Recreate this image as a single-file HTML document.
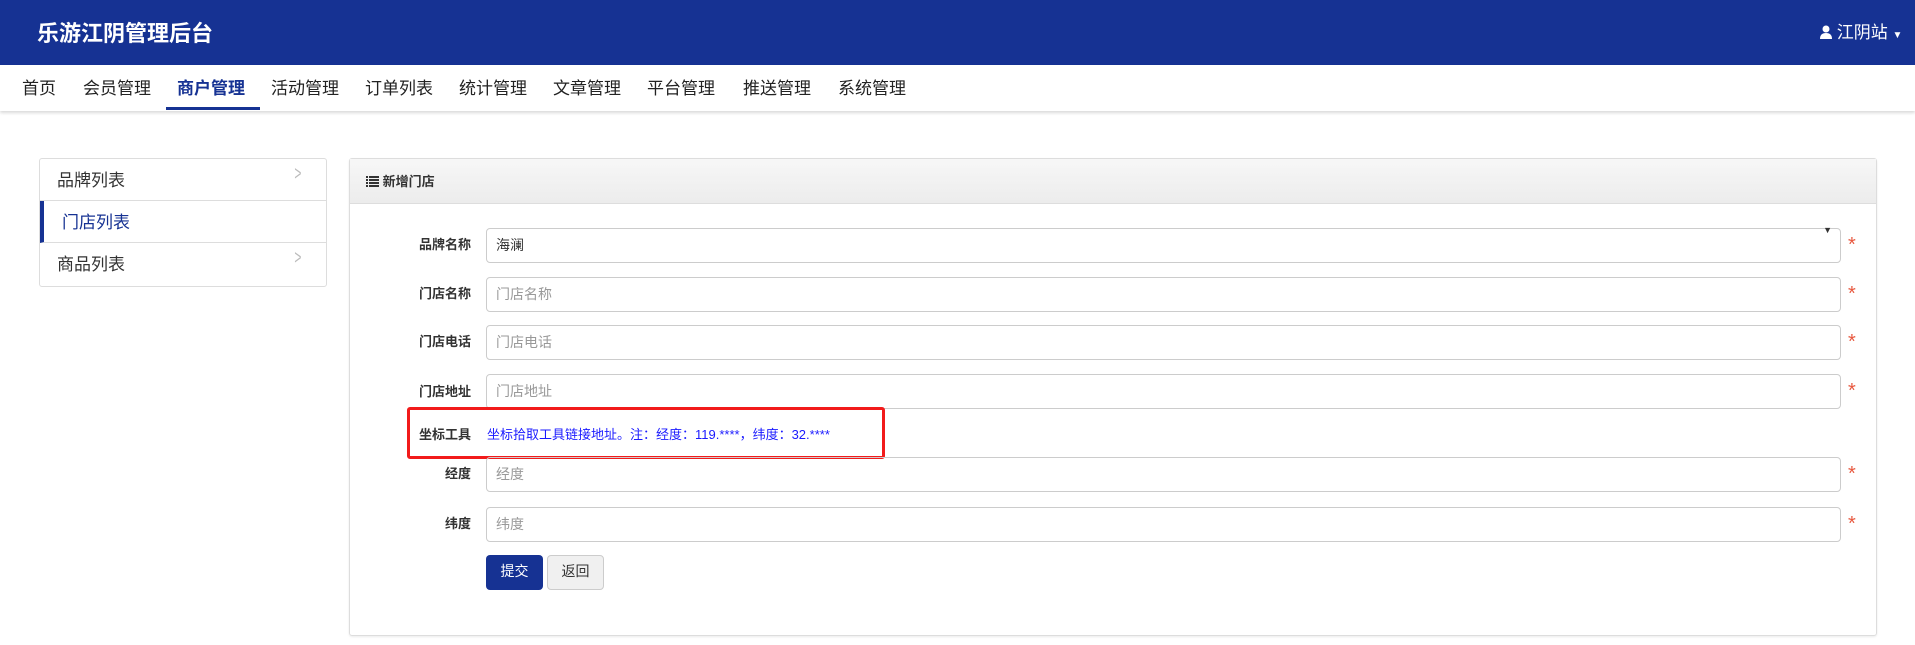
<!DOCTYPE html>
<html><head><meta charset="utf-8"><style>
*{box-sizing:border-box;margin:0;padding:0}
body{width:1915px;height:645px;overflow:hidden;background:#fff;font-family:"Liberation Sans","Noto Sans CJK SC",sans-serif;color:#333;position:relative}
.hd{position:absolute;left:0;top:0;width:1915px;height:65px;background:#163293}
.title{position:absolute;left:37px;top:16px;font-size:22px;font-weight:bold;color:#fff}
.user{position:absolute;left:1820px;top:18px;color:#fff;font-size:17px}
.nav{position:absolute;left:0;top:65px;width:1915px;height:46px;background:#fff;box-shadow:0 2px 3px rgba(0,0,0,.15)}
.nav span{position:absolute;top:9px;font-size:17px;color:#222}
.nav .act{color:#163293;font-weight:bold}
.ul{position:absolute;left:166px;top:107px;width:94px;height:3px;background:#163293}
.side{position:absolute;left:39px;top:158px;width:288px;height:129px;border:1px solid #ddd;border-radius:3px}
.side div{height:42px;border-bottom:1px solid #ddd;font-size:17px;padding:7px 0 0 17px;position:relative}
.side div:last-child{border:none}
.side .a{border-left:4px solid #163293;padding-left:18px;color:#163293}
.side i{position:absolute;right:22px;top:4px;color:#bbb;font-style:normal;font-size:20px;transform:scaleX(.6)}
.panel{position:absolute;left:349px;top:158px;width:1528px;height:478px;border:1px solid #ddd;border-radius:3px;box-shadow:0 1px 2px rgba(0,0,0,.08)}
.ph{height:45px;background:linear-gradient(#f7f7f7,#ececec);border-bottom:1px solid #ddd;font-size:13px;font-weight:bold;padding:12px 0 0 16px}
.lab{position:absolute;width:120px;left:351px;text-align:right;font-size:13px;font-weight:bold;color:#333}
.inp{position:absolute;left:486px;width:1355px;height:35px;border:1px solid #ccc;border-radius:4px;font-size:14px;padding:6px 0 0 9px;color:#999}
.st{position:absolute;left:1848px;color:#e8583f;font-size:20px}
</style></head><body>
<div class="hd"><div class="title">乐游江阴管理后台</div>
<div class="user"><svg width="12" height="14" viewBox="0 0 12 14" style="vertical-align:-1px"><circle cx="6" cy="4" r="3.5" fill="#fff"/><path d="M0 14 Q0 8 6 8 Q12 8 12 14Z" fill="#fff"/></svg> 江阴站 <span style="font-size:10px">▼</span></div></div>
<div class="nav">
<span style="left:22px">首页</span><span style="left:83px">会员管理</span><span class="act" style="left:177px">商户管理</span><span style="left:271px">活动管理</span><span style="left:365px">订单列表</span><span style="left:459px">统计管理</span><span style="left:553px">文章管理</span><span style="left:647px">平台管理</span><span style="left:743px">推送管理</span><span style="left:838px">系统管理</span>
</div>
<div class="ul"></div>
<div class="side"><div>品牌列表<i>&gt;</i></div><div class="a">门店列表</div><div>商品列表<i>&gt;</i></div></div>
<div class="panel"><div class="ph"><svg width="13" height="11" viewBox="0 0 13 11" style="vertical-align:-1px"><path d="M0 0h2v2H0zM3 0h10v2H3zM0 3h2v2H0zM3 3h10v2H3zM0 6h2v2H0zM3 6h10v2H3zM0 9h2v2H0zM3 9h10v2H3z" fill="#333"/></svg> 新增门店</div></div>
<div class="lab" style="top:234px">品牌名称</div><div class="inp" style="top:228px;color:#333">海澜<span style="position:absolute;right:8px;top:-4px;font-size:9px">▼</span></div><div class="st" style="top:234px">*</div>
<div class="lab" style="top:283px">门店名称</div><div class="inp" style="top:277px">门店名称</div><div class="st" style="top:283px">*</div>
<div class="lab" style="top:331px">门店电话</div><div class="inp" style="top:325px">门店电话</div><div class="st" style="top:331px">*</div>
<div class="lab" style="top:381px">门店地址</div><div class="inp" style="top:374px">门店地址</div><div class="st" style="top:380px">*</div>
<div style="position:absolute;left:407px;top:407px;width:478px;height:52px;border:3px solid #f21b1b;border-radius:3px"></div>
<div class="lab" style="top:424px">坐标工具</div><div style="position:absolute;left:487px;top:424px;font-size:13px;color:#1a1aff">坐标拾取工具链接地址。注：经度：119.****，纬度：32.****</div>
<div class="lab" style="top:463px">经度</div><div class="inp" style="top:457px">经度</div><div class="st" style="top:463px">*</div>
<div class="lab" style="top:513px">纬度</div><div class="inp" style="top:507px">纬度</div><div class="st" style="top:513px">*</div>
<div style="position:absolute;left:486px;top:555px;width:57px;height:35px;background:#163293;border-radius:4px;color:#fff;font-size:14px;text-align:center;padding-top:6px">提交</div>
<div style="position:absolute;left:547px;top:555px;width:57px;height:35px;background:#f0f0f0;border:1px solid #ccc;border-radius:4px;color:#333;font-size:14px;text-align:center;padding-top:5px">返回</div>
</body></html>
